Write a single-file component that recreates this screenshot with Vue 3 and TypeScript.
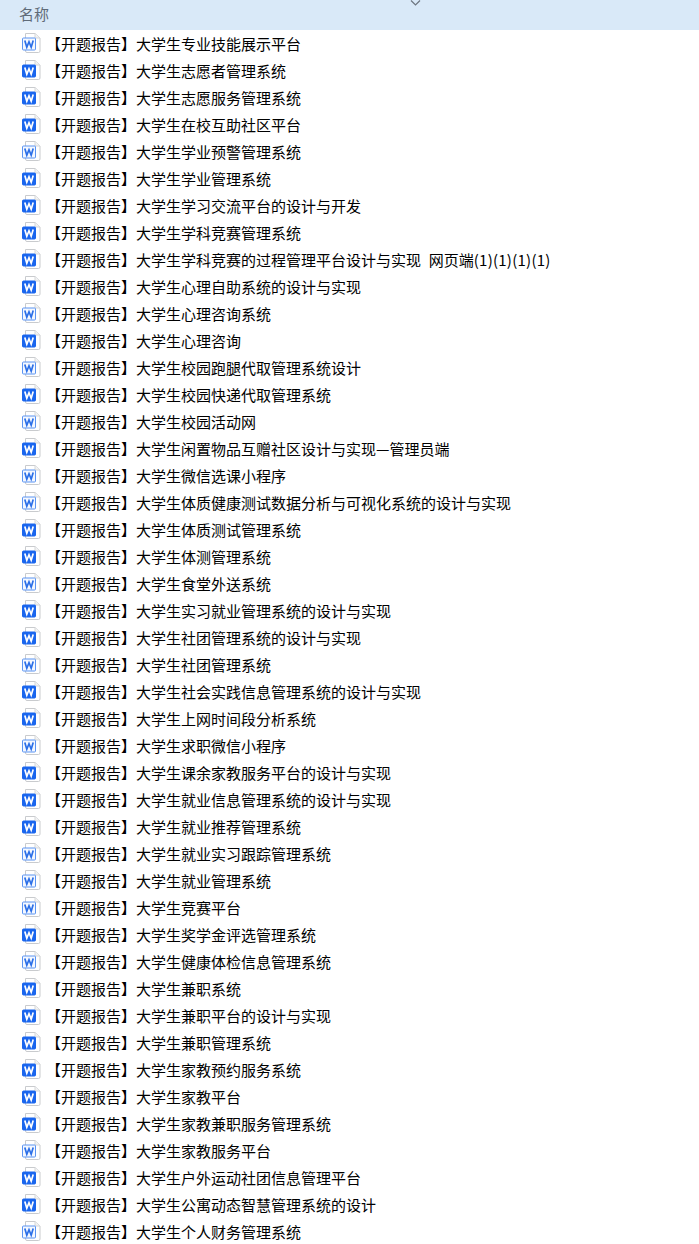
<template>
  <div class="file-list">
    <div class="list-header">
      <span class="header-name">名称</span>
      <svg class="sort-arrow" width="11" height="6" viewBox="0 0 11 6">
        <path d="M1 0.5 L5.5 5 L10 0.5" fill="none" stroke="#6d7680" stroke-width="1.2" />
      </svg>
    </div>
    <div class="list-body">
      <div v-for="(file, index) in files" :key="index" class="file-row">
        <svg class="doc-icon" width="19" height="20" viewBox="0 0 19 20">
          <!-- page -->
          <path d="M3.5 0.5 H13 L18 5 V18 Q18 19.5 16.5 19.5 H5 Q3.5 19.5 3.5 18 Z" fill="#fff" stroke="#c9cbce" />
          <path d="M13 0.5 V5 H18" fill="#f1f2f3" stroke="#d5d7d9" />
          <!-- badge -->
          <rect
            :class="isLight(index) ? 'badge-light' : 'badge-solid'"
            x="0.5"
            y="5"
            width="13"
            height="12"
            rx="1"
          />
          <path
            d="M2.8 7.6 L4.8 14.2 L7 8.8 L9.2 14.2 L11.2 7.6"
            fill="none"
            :stroke="isLight(index) ? '#2b6fe8' : '#fff'"
            stroke-width="1.7"
          />
        </svg>
        <span class="file-name">【开题报告】大学生{{ file.name }}<span v-if="file.suffix" class="copy-suffix">{{ file.suffix }}</span></span>
      </div>
    </div>
  </div>
</template>

<script setup lang="ts">
interface FileItem {
  name: string;
  suffix?: string;
}

const names: string[] = [
  '专业技能展示平台',
  '志愿者管理系统',
  '志愿服务管理系统',
  '在校互助社区平台',
  '学业预警管理系统',
  '学业管理系统',
  '学习交流平台的设计与开发',
  '学科竞赛管理系统',
  '学科竞赛的过程管理平台设计与实现  网页端',
  '心理自助系统的设计与实现',
  '心理咨询系统',
  '心理咨询',
  '校园跑腿代取管理系统设计',
  '校园快递代取管理系统',
  '校园活动网',
  '闲置物品互赠社区设计与实现—管理员端',
  '微信选课小程序',
  '体质健康测试数据分析与可视化系统的设计与实现',
  '体质测试管理系统',
  '体测管理系统',
  '食堂外送系统',
  '实习就业管理系统的设计与实现',
  '社团管理系统的设计与实现',
  '社团管理系统',
  '社会实践信息管理系统的设计与实现',
  '上网时间段分析系统',
  '求职微信小程序',
  '课余家教服务平台的设计与实现',
  '就业信息管理系统的设计与实现',
  '就业推荐管理系统',
  '就业实习跟踪管理系统',
  '就业管理系统',
  '竞赛平台',
  '奖学金评选管理系统',
  '健康体检信息管理系统',
  '兼职系统',
  '兼职平台的设计与实现',
  '兼职管理系统',
  '家教预约服务系统',
  '家教平台',
  '家教兼职服务管理系统',
  '家教服务平台',
  '户外运动社团信息管理平台',
  '公寓动态智慧管理系统的设计',
  '个人财务管理系统'
];

const files: FileItem[] = names.map((name, index) =>
  index === 8 ? { name, suffix: '(1)(1)(1)(1)' } : { name }
);

// 浅色图标所在的行
const lightRows = new Set<number>([0, 4, 10, 12, 14, 16, 17, 20, 23, 26, 30, 31, 32, 34, 41, 44]);

const isLight = (index: number): boolean => lightRows.has(index);
</script>

<style scoped>
.file-list {
  height: 1244px;
  overflow: hidden;
  background: #fff;
  font-family: "Noto Sans CJK SC", "Liberation Sans", sans-serif;
}

.list-header {
  position: relative;
  display: flex;
  align-items: center;
  height: 30px;
  padding-left: 19px;
  background: #d9e9f8;
}

.header-name {
  margin-top: -4px;
  font-size: 15px;
  color: #5f6b78;
}

.sort-arrow {
  position: absolute;
  top: 0;
  left: 410px;
}

.list-body {
  padding-top: 1px;
}

.file-row {
  display: flex;
  align-items: center;
  height: 27px;
  padding-left: 22px;
}

.doc-icon {
  flex-shrink: 0;
  margin-top: -3px;
}

.badge-solid {
  fill: #1a66ee;
  stroke: #1a66ee;
}

.badge-light {
  fill: #f4f8ff;
  stroke: #5b94f2;
}

.file-name {
  margin-top: -2px;
  margin-left: 5px;
  font-size: 15px;
  line-height: 27px;
  word-spacing: 0.5px;
  color: #000;
  white-space: pre;
}

.copy-suffix {
  letter-spacing: 0.25px;
}
</style>
